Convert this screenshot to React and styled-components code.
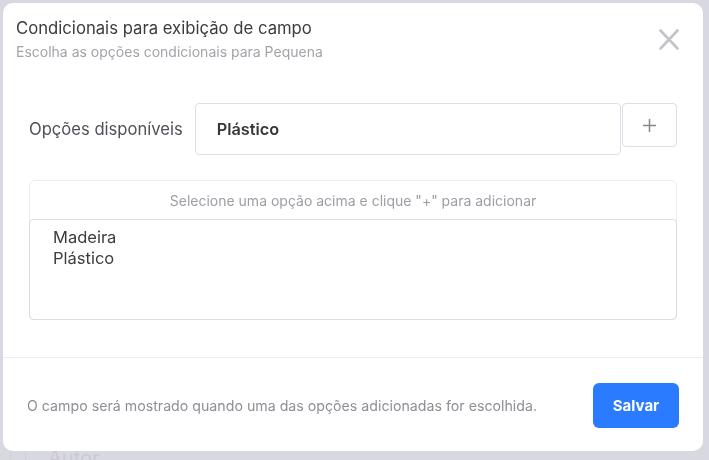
import React, { useState } from 'react'
import styled, { createGlobalStyle } from 'styled-components';

const GlobalStyle = createGlobalStyle`
  html, body {
    margin: 0;
    padding: 0;
    height: 100%;
    overflow: hidden;
  }
  body {
    font-family: Inter, "Noto Sans", "Liberation Sans", sans-serif;
    background: #f4f4f8;
  }
`;

const Page = styled.div`
  height: 100vh;
  display: flex;
  padding: 444px 0 0 10px;
  box-sizing: border-box;
`;

const BackCell = styled.div`
  border-left: 1px solid #d6d6de;
  padding-left: 14px;
  display: flex;
`;

const BackLabel = styled.div`
  border-left: 1px solid #d6d6de;
  padding: 2px 0 0 22px;
  font-size: 20px;
  color: #c2c2cb;
`;

const Overlay = styled.div`
  position: fixed;
  inset: 0;
  background: rgba(205, 205, 216, 0.72);
  padding: 3px;
  display: flex;
  align-items: flex-start;
`;

const Modal = styled.div`
  width: 700px;
  height: 448px;
  background: #fff;
  border-radius: 10px;
  display: flex;
  flex-direction: column;
  overflow: hidden;
`;

const Header = styled.div`
  display: flex;
  justify-content: space-between;
  align-items: flex-start;
  padding: 15px 24px 0 13px;
`;

const Title = styled.h1`
  margin: 0;
  font-size: 16.7px;
  line-height: 20px;
  font-weight: 400;
  color: #3b3b40;
`;

const SubTitle = styled.p`
  margin: 5px 0 0;
  font-size: 14px;
  line-height: 18px;
  color: #a3a3aa;
`;

const Close = styled.button`
  border: none;
  background: transparent;
  padding: 0;
  margin-top: 11px;
  width: 20px;
  height: 21px;
  cursor: pointer;
  display: flex;
`;

const Body = styled.div`
  flex: 1;
  padding: 42px 26px 0;
`;

const Row = styled.div`
  display: flex;
  align-items: flex-start;
`;

const Label = styled.label`
  height: 52px;
  display: flex;
  align-items: center;
  font-size: 16.6px;
  color: #505058;
  margin-right: 12px;
  white-space: nowrap;
`;

const Select = styled.div`
  flex: 1;
  height: 52px;
  box-sizing: border-box;
  border: 1px solid #dedee6;
  border-radius: 4px;
  display: flex;
  align-items: center;
  padding-left: 21px;
  font-size: 16.3px;
  font-weight: 600;
  color: #35353a;
`;

const AddButton = styled.button`
  width: 55px;
  height: 44px;
  box-sizing: border-box;
  margin-left: 1px;
  border: 1px solid #dedee6;
  border-radius: 4px;
  background: #fff;
  display: flex;
  align-items: center;
  justify-content: center;
  cursor: pointer;
  padding: 0;
`;

const Box = styled.div`
  margin-top: 25px;
  height: 140px;
  box-sizing: border-box;
  border: 1px solid #ececf1;
  border-radius: 6px;
  display: flex;
  flex-direction: column;
`;

const BoxHeader = styled.div`
  height: 38px;
  display: flex;
  align-items: center;
  justify-content: center;
  font-size: 14px;
  color: #9d9da5;
`;

const List = styled.ul`
  flex: 1;
  margin: 0 -1px -1px;
  padding: 7px 0 0 23px;
  list-style: none;
  border: 1px solid #dcdce4;
  border-radius: 4px;
`;

const Item = styled.li`
  font-size: 16.5px;
  line-height: 21px;
  color: #3b3b40;
`;

const Footer = styled.div`
  height: 92px;
  border-top: 1px solid #ebebf0;
  display: flex;
  align-items: center;
  justify-content: space-between;
  padding: 1px 24px 0;
`;

const Note = styled.span`
  font-size: 14.2px;
  color: #8e8e96;
`;

const SaveButton = styled.button`
  width: 86px;
  height: 45px;
  border: none;
  border-radius: 6px;
  background: #2a7bff;
  color: #fff;
  font-family: inherit;
  font-size: 15px;
  font-weight: 700;
  cursor: pointer;
`;

const options = ['Madeira', 'Plástico'];

const App = () => {
  const [selected] = useState('Plástico');

  return (
    <>
      <GlobalStyle />
      <Page>
        <BackCell>
          <BackLabel>Autor</BackLabel>
        </BackCell>
      </Page>
      <Overlay>
        <Modal>
          <Header>
            <div>
              <Title>Condicionais para exibição de campo</Title>
              <SubTitle>Escolha as opções condicionais para Pequena</SubTitle>
            </div>
            <Close aria-label="Fechar">
              <svg width="20" height="21" viewBox="0 0 20 21">
                <path d="M1.5 1.5 L18.5 19.5 M18.5 1.5 L1.5 19.5" stroke="#c3c3c8" strokeWidth="2.6" strokeLinecap="round" />
              </svg>
            </Close>
          </Header>
          <Body>
            <Row>
              <Label>Opções disponíveis</Label>
              <Select>{selected}</Select>
              <AddButton aria-label="Adicionar">
                <svg width="13" height="13" viewBox="0 0 13 13">
                  <path d="M6.5 0 V13 M0 6.5 H13" stroke="#86868e" strokeWidth="1.5" />
                </svg>
              </AddButton>
            </Row>
            <Box>
              <BoxHeader>Selecione uma opção acima e clique "+" para adicionar</BoxHeader>
              <List>
                {options.map(o => <Item key={o}>{o}</Item>)}
              </List>
            </Box>
          </Body>
          <Footer>
            <Note>O campo será mostrado quando uma das opções adicionadas for escolhida.</Note>
            <SaveButton>Salvar</SaveButton>
          </Footer>
        </Modal>
      </Overlay>
    </>
  )
}

export default App
